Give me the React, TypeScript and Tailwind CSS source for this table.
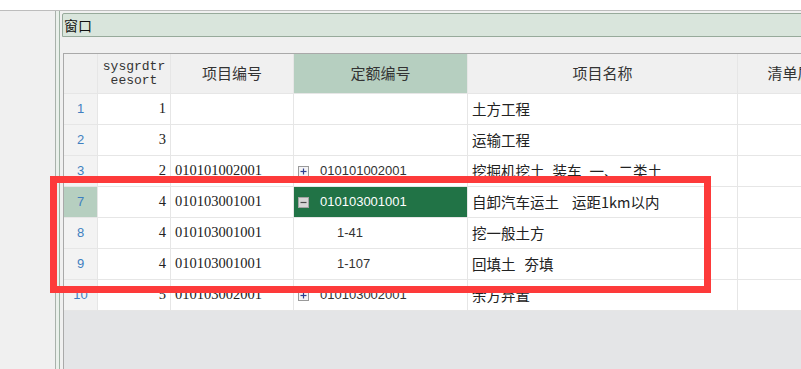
import React from "react";

type Row = {
  no: string;
  sort: string;
  code: string;
  quota: string;
  name: string[];
  gap?: string;
  toggle?: "plus" | "minus";
  child?: boolean;
  selected?: boolean;
};

const rows: Row[] = [
  { no: "1", sort: "1", code: "", quota: "", name: ["土方工程"] },
  { no: "2", sort: "3", code: "", quota: "", name: ["运输工程"] },
  { no: "3", sort: "2", code: "010101002001", quota: "010101002001", name: ["挖掘机挖土", "装车", "一、二类土"], gap: "ml-[8px]", toggle: "plus" },
  { no: "7", sort: "4", code: "010103001001", quota: "010103001001", name: ["自卸汽车运土", "运距1km以内"], gap: "ml-[13px]", toggle: "minus", selected: true },
  { no: "8", sort: "4", code: "010103001001", quota: "1-41", name: ["挖一般土方"], child: true },
  { no: "9", sort: "4", code: "010103001001", quota: "1-107", name: ["回填土", "夯填"], gap: "ml-[9px]", child: true },
  { no: "10", sort: "5", code: "010103002001", quota: "010103002001", name: ["余方弃置"], toggle: "plus" },
];

const cjk = "font-['Noto_Sans_CJK_SC',sans-serif]";
const cell = "border-r border-b border-[#e6e6e6] flex items-center overflow-hidden whitespace-nowrap";

function ToggleBox({ kind }: { kind: "plus" | "minus" }) {
  if (kind === "minus") {
    return (
      <svg width="11" height="11" viewBox="0 0 11 11" className="shrink-0">
        <rect x="0.5" y="0.5" width="10" height="10" fill="#d6d6d6" stroke="#a3a3a3" />
        <line x1="2.5" y1="5.5" x2="8.5" y2="5.5" stroke="#4a4a4a" strokeWidth="1.2" />
      </svg>
    );
  }
  return (
    <svg width="11" height="11" viewBox="0 0 11 11" className="shrink-0">
      <rect x="0.5" y="0.5" width="10" height="10" fill="#f4f4f6" stroke="#9a9a9a" />
      <line x1="2.5" y1="5.5" x2="8.5" y2="5.5" stroke="#2f3f8f" strokeWidth="1.2" />
      <line x1="5.5" y1="2.5" x2="5.5" y2="8.5" stroke="#2f3f8f" strokeWidth="1.2" />
    </svg>
  );
}

function DataRow({ r }: { r: Row }) {
  return (
    <>
      <div className={`${cell} justify-center h-[31px] font-['Liberation_Sans',sans-serif] text-[13px] text-[#3f7fc0] ${r.selected ? "bg-[#b6cfc0]" : "bg-[#f3f3f3]"}`}>
        {r.no}
      </div>
      <div className={`${cell} justify-end pr-[4px] bg-white font-['Liberation_Serif',serif] text-[14.5px] text-[#222]`}>
        {r.sort}
      </div>
      <div className={`${cell} pl-[4px] bg-white font-['Liberation_Serif',serif] text-[14.5px] text-[#222]`}>
        {r.code}
      </div>
      <div
        className={`${cell} font-['Liberation_Sans',sans-serif] text-[13px] ${
          r.selected ? "bg-[#217346] text-white border-[#4f8f6a]" : "bg-white text-[#333]"
        } ${r.child ? "pl-[43px]" : "pl-[4px]"}`}
      >
        {r.toggle && <ToggleBox kind={r.toggle} />}
        <span className={r.toggle ? "ml-[11px]" : ""}>{r.quota}</span>
      </div>
      <div className={`${cell} pl-[4px] bg-white ${cjk} text-[14.5px] text-[#222]`}>
        {r.name.map((part, i) => (
          <span key={i} className={i > 0 ? r.gap : ""}>
            {part}
          </span>
        ))}
      </div>
      <div className={`${cell} bg-white`} />
    </>
  );
}

export default function App() {
  return (
    <div className={`w-[801px] h-[369px] overflow-hidden bg-white relative ${cjk}`}>
      <div className="h-[10px] bg-white" />
      <div className="h-px bg-[#bdbdbd]" />
      <div className="flex h-[358px]">
        <div className="w-[55px] bg-[#f0f0f0]" />
        <div className="w-px bg-[#a9b1ab]" />
        <div className="w-[3px] bg-[#eaf0eb]" />
        <div className="w-px bg-[#9fb3a4]" />
        <div className="flex-1 flex flex-col bg-[#f0f0f0] pl-[2px] pt-[2px] min-w-0">
          <div className="h-[24px] border border-[#97aa9b] bg-[#d9e5dc] rounded-tl-[2px] flex items-center pl-[1px] text-[14px] text-[#111] -mr-px">
            窗口
          </div>
          <div className="h-[16px]" />
          <div className="flex-1 ml-px border-l border-t border-[#a9a9a9] bg-[#e4e5e7] overflow-hidden">
            <div className="grid grid-cols-[34px_73px_123px_174px_270px_120px] w-max">
              <div className={`${cell} h-[40px] bg-[#f0f0f0]`} />
              <div className={`${cell} flex-col justify-center bg-[#f0f0f0] font-['Liberation_Mono',monospace] text-[13px] leading-[14px] text-[#333]`}>
                <span>sysgrdtr</span>
                <span>eesort</span>
              </div>
              <div className={`${cell} justify-center bg-[#f0f0f0] text-[15px] text-[#333]`}>项目编号</div>
              <div className={`${cell} justify-center bg-[#b6cfc0] text-[15px] text-[#333]`}>定额编号</div>
              <div className={`${cell} justify-center bg-[#f0f0f0] text-[15px] text-[#333]`}>项目名称</div>
              <div className={`${cell} justify-center bg-[#f0f0f0] text-[15px] text-[#333]`}>清单属性</div>
              {rows.map((r) => (
                <DataRow key={r.no} r={r} />
              ))}
            </div>
          </div>
        </div>
      </div>
      <div className="absolute left-[50px] top-[176px] w-[661px] h-[117px] border-[7px] border-[#fd3a3a]" />
    </div>
  );
}
